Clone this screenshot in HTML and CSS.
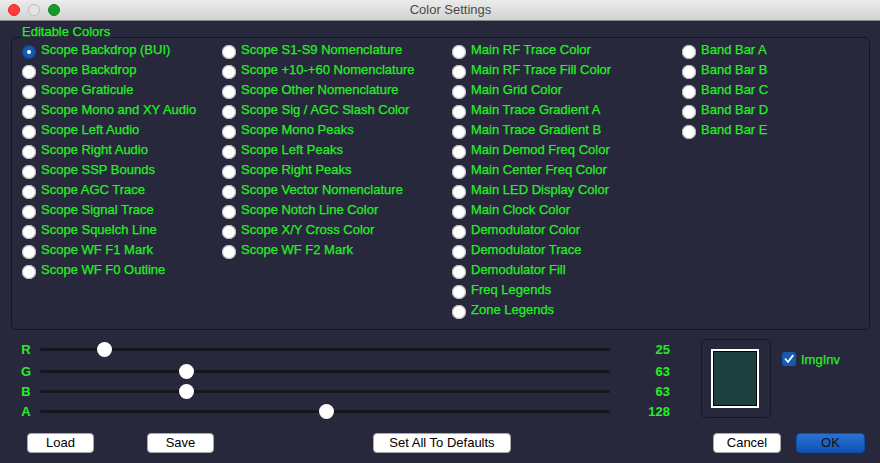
FILE: index.html
```html
<!DOCTYPE html>
<html>
<head>
<meta charset="utf-8">
<link rel="stylesheet" href="styles.css">
</head>
<body>
<div class="window">
  <div class="titlebar">
    <div class="lights"><span class="light red"></span><span class="light grey"></span><span class="light green"></span></div>
    <div class="title">Color Settings</div>
  </div>
  <div class="group">
    <span class="group-title">Editable Colors</span>
    <div class="cols">
      <div class="col">
        <div class="row"><span class="radio on"></span><span>Scope Backdrop (BUI)</span></div>
        <div class="row"><span class="radio"></span><span>Scope Backdrop</span></div>
        <div class="row"><span class="radio"></span><span>Scope Graticule</span></div>
        <div class="row"><span class="radio"></span><span>Scope Mono and XY Audio</span></div>
        <div class="row"><span class="radio"></span><span>Scope Left Audio</span></div>
        <div class="row"><span class="radio"></span><span>Scope Right Audio</span></div>
        <div class="row"><span class="radio"></span><span>Scope SSP Bounds</span></div>
        <div class="row"><span class="radio"></span><span>Scope AGC Trace</span></div>
        <div class="row"><span class="radio"></span><span>Scope Signal Trace</span></div>
        <div class="row"><span class="radio"></span><span>Scope Squelch Line</span></div>
        <div class="row"><span class="radio"></span><span>Scope WF F1 Mark</span></div>
        <div class="row"><span class="radio"></span><span>Scope WF F0 Outline</span></div>
      </div>
      <div class="col">
        <div class="row"><span class="radio"></span><span>Scope S1-S9 Nomenclature</span></div>
        <div class="row"><span class="radio"></span><span>Scope +10-+60 Nomenclature</span></div>
        <div class="row"><span class="radio"></span><span>Scope Other Nomenclature</span></div>
        <div class="row"><span class="radio"></span><span>Scope Sig / AGC Slash Color</span></div>
        <div class="row"><span class="radio"></span><span>Scope Mono Peaks</span></div>
        <div class="row"><span class="radio"></span><span>Scope Left Peaks</span></div>
        <div class="row"><span class="radio"></span><span>Scope Right Peaks</span></div>
        <div class="row"><span class="radio"></span><span>Scope Vector Nomenclature</span></div>
        <div class="row"><span class="radio"></span><span>Scope Notch Line Color</span></div>
        <div class="row"><span class="radio"></span><span>Scope X/Y Cross Color</span></div>
        <div class="row"><span class="radio"></span><span>Scope WF F2 Mark</span></div>
      </div>
      <div class="col">
        <div class="row"><span class="radio"></span><span>Main RF Trace Color</span></div>
        <div class="row"><span class="radio"></span><span>Main RF Trace Fill Color</span></div>
        <div class="row"><span class="radio"></span><span>Main Grid Color</span></div>
        <div class="row"><span class="radio"></span><span>Main Trace Gradient A</span></div>
        <div class="row"><span class="radio"></span><span>Main Trace Gradient B</span></div>
        <div class="row"><span class="radio"></span><span>Main Demod Freq Color</span></div>
        <div class="row"><span class="radio"></span><span>Main Center Freq Color</span></div>
        <div class="row"><span class="radio"></span><span>Main LED Display Color</span></div>
        <div class="row"><span class="radio"></span><span>Main Clock Color</span></div>
        <div class="row"><span class="radio"></span><span>Demodulator Color</span></div>
        <div class="row"><span class="radio"></span><span>Demodulator Trace</span></div>
        <div class="row"><span class="radio"></span><span>Demodulator Fill</span></div>
        <div class="row"><span class="radio"></span><span>Freq Legends</span></div>
        <div class="row"><span class="radio"></span><span>Zone Legends</span></div>
      </div>
      <div class="col">
        <div class="row"><span class="radio"></span><span>Band Bar A</span></div>
        <div class="row"><span class="radio"></span><span>Band Bar B</span></div>
        <div class="row"><span class="radio"></span><span>Band Bar C</span></div>
        <div class="row"><span class="radio"></span><span>Band Bar D</span></div>
        <div class="row"><span class="radio"></span><span>Band Bar E</span></div>
      </div>
    </div>
  </div>
  <div class="controls">
    <div class="sliders">
      <div class="slider first"><span class="s-label">R</span><div class="track"><span class="thumb" style="left:11.2%"></span></div><span class="s-value">25</span></div>
      <div class="slider"><span class="s-label">G</span><div class="track"><span class="thumb" style="left:25.6%"></span></div><span class="s-value">63</span></div>
      <div class="slider"><span class="s-label">B</span><div class="track"><span class="thumb" style="left:25.6%"></span></div><span class="s-value">63</span></div>
      <div class="slider"><span class="s-label">A</span><div class="track"><span class="thumb" style="left:50.2%"></span></div><span class="s-value">128</span></div>
    </div>
    <div class="preview"><div class="swatch"></div></div>
    <div class="imginv">
      <span class="checkbox"><svg width="14" height="14" viewBox="0 0 14 14"><path d="M3.5 7.2 L6 10 L10.8 3.6" fill="none" stroke="#fff" stroke-width="1.8" stroke-linecap="round" stroke-linejoin="round"/></svg></span>
      <span class="cb-label">ImgInv</span>
    </div>
  </div>
  <div class="buttons">
    <button class="btn btn-load">Load</button>
    <button class="btn btn-save">Save</button>
    <button class="btn btn-defaults">Set All To Defaults</button>
    <button class="btn btn-cancel">Cancel</button>
    <button class="btn btn-ok">OK</button>
  </div>
</div>
</body>
</html>
```

FILE: styles.css
```css
html, body {
  margin: 0;
  padding: 0;
  background: #27283b;
}
.window {
  width: 880px;
  height: 463px;
  overflow: hidden;
  background: #27283b;
  font-family: "Liberation Sans", Arial, sans-serif;
  font-size: 13px;
  color: #22f022;
  -webkit-text-stroke: 0.25px #22f022;
}
.titlebar {
  position: relative;
  height: 20px;
  border-bottom: 1px solid #8a8a8a;
  background: linear-gradient(#ebebeb, #d3d3d3);
  display: flex;
  align-items: center;
  justify-content: center;
  -webkit-text-stroke: 0;
}
.lights {
  position: absolute;
  left: 8px;
  top: 4px;
  display: flex;
  gap: 8px;
}
.light {
  width: 12px;
  height: 12px;
  border-radius: 50%;
  box-sizing: border-box;
}
.light.red { background: #fc3b3a; border: 1px solid #de2a2a; }
.light.grey { background: #e4e4e4; border: 1px solid #bdbdbd; }
.light.green { background: #189a2a; border: 1px solid #12831f; }
.title {
  color: #4a4a4a;
  font-size: 13px;
  padding-left: 21px;
  line-height: 20px;
}
.group {
  position: relative;
  margin: 16px 10px 0 11px;
  height: 293px;
  box-sizing: border-box;
  border: 1px solid #16161f;
  border-radius: 5px;
}
.group-title {
  position: absolute;
  top: -13px;
  left: 9px;
  padding: 0 1px;
  line-height: 14px;
  background: #27283b;
}
.cols {
  display: grid;
  grid-template-columns: 200px 230px 230px 1fr;
  padding: 1px 0 0 10px;
}
.row {
  display: flex;
  align-items: center;
  height: 20px;
  white-space: nowrap;
}
.radio {
  position: relative;
  top: 3px;
  flex: none;
  width: 14px;
  height: 14px;
  border-radius: 50%;
  background: #fff;
  box-shadow: inset 0 0 0 1px #b8b8b8;
  margin-right: 5px;
}
.radio.on {
  background: #1559b0;
  box-shadow: inset 0 0 0 1px #0d3f82;
}
.radio.on::after {
  content: "";
  position: absolute;
  left: 5px;
  top: 5px;
  width: 4px;
  height: 4px;
  border-radius: 50%;
  background: #fff;
}
.controls {
  display: flex;
  margin: 9px 0 0 18px;
}
.slider {
  display: flex;
  align-items: center;
  height: 20px;
}
.slider.first {
  margin-bottom: 2px;
}
.s-label {
  width: 16px;
  text-align: center;
  font-weight: bold;
  -webkit-text-stroke: 0;
}
.track {
  position: relative;
  width: 570px;
  height: 3px;
  margin-left: 6px;
  background: #15161f;
  border-radius: 2px;
}
.thumb {
  position: absolute;
  top: -6px;
  width: 15px;
  height: 15px;
  margin-left: -7px;
  border-radius: 50%;
  background: #fff;
}
.s-value {
  width: 60px;
  text-align: right;
  font-weight: bold;
  -webkit-text-stroke: 0;
}
.preview {
  margin-left: 31px;
  width: 70px;
  height: 79px;
  box-sizing: border-box;
  border: 1px solid #17171f;
  border-radius: 5px;
  padding: 9px;
}
.swatch {
  width: 48px;
  height: 59px;
  box-sizing: border-box;
  border: 2px solid #fff;
  box-shadow: inset 0 0 0 1px #000;
  background: #1c3f3f;
}
.imginv {
  display: flex;
  align-items: center;
  margin: 13px 0 0 11px;
  height: 14px;
}
.checkbox {
  width: 14px;
  height: 14px;
  border-radius: 3px;
  background: #1559b0;
  display: flex;
}
.cb-label {
  margin-left: 5px;
}
.buttons {
  display: flex;
  margin-top: 12px;
  padding-left: 27px;
}
.btn {
  height: 20px;
  padding: 0;
  box-sizing: border-box;
  border: 1px solid #a9a9a9;
  border-radius: 4px;
  background: #fff;
  color: #000;
  -webkit-text-stroke: 0;
  font-family: "Liberation Sans", Arial, sans-serif;
  font-size: 13px;
  line-height: 18px;
  text-align: center;
}
.btn-load { width: 67px; }
.btn-save { width: 67px; margin-left: 53px; }
.btn-defaults { width: 138px; margin-left: 159px; }
.btn-cancel { width: 68px; margin-left: 202px; }
.btn-ok {
  width: 69px;
  margin-left: 15px;
  border-color: #0f4fa8;
  background: linear-gradient(#2a72d6, #0f52b4);
  color: #111;
}
```
